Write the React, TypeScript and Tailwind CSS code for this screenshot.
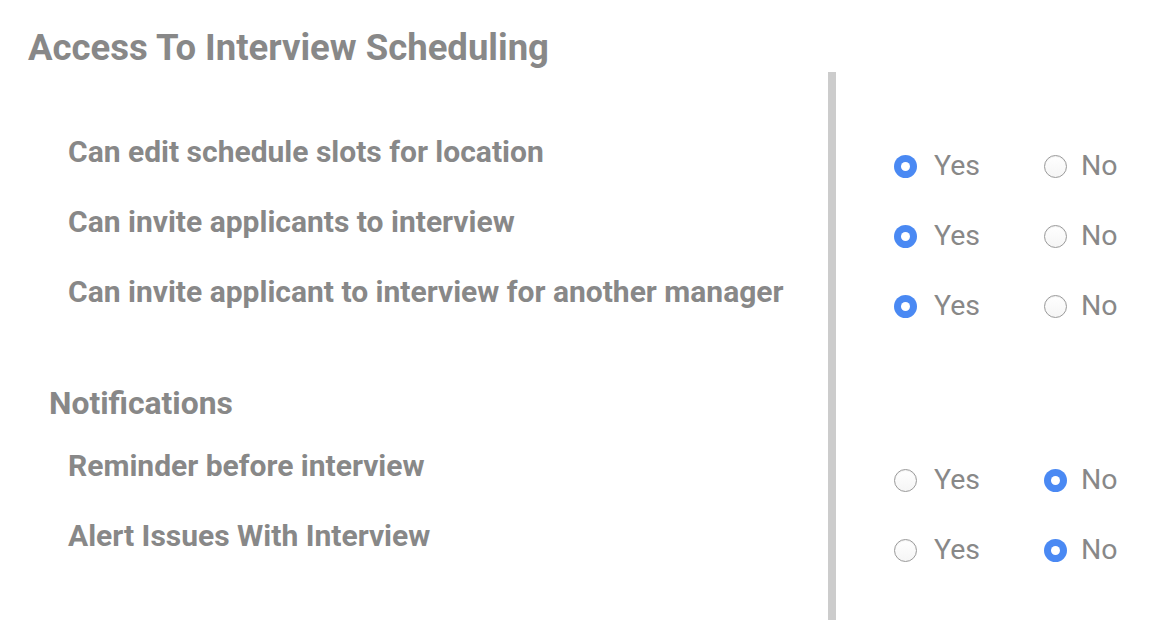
const access = [
  { label: "Can edit schedule slots for location", value: true },
  { label: "Can invite applicants to interview", value: true },
  { label: "Can invite applicant to interview for another manager", value: true },
];

const notifications = [
  { label: "Reminder before interview", value: false },
  { label: "Alert Issues With Interview", value: false },
];

function Radio({ checked }: { checked: boolean }) {
  return checked ? (
    <span className="flex h-[23px] w-[23px] shrink-0 items-center justify-center rounded-full bg-[#4a89f3]">
      <span className="block h-[9px] w-[9px] rounded-full bg-white" />
    </span>
  ) : (
    <span className="block h-[23px] w-[23px] shrink-0 rounded-full border border-[#9a9a9a] bg-gradient-to-b from-white to-[#f5f5f5] shadow-[inset_0_1px_1px_rgba(0,0,0,0.06)]" />
  );
}

function Choice({ value }: { value: boolean }) {
  return (
    <div className="flex h-[70px] items-center pl-[58px]">
      <div className="flex w-[150px] items-center gap-[17px]">
        <Radio checked={value} />
        <span>Yes</span>
      </div>
      <div className="flex items-center gap-[14px]">
        <Radio checked={!value} />
        <span>No</span>
      </div>
    </div>
  );
}

export default function App() {
  return (
    <div className="h-[620px] overflow-hidden bg-white font-['Roboto',sans-serif] text-[#888888]">
      <h1 className="pl-[28px] pt-[27px] text-[36.5px] font-bold leading-[42px]">
        Access To Interview Scheduling
      </h1>

      <div className="mt-[3px] flex h-[548px]">
        <div className="w-[828px] pt-[45px] text-[30px] font-bold">
          {access.map((row) => (
            <div key={row.label} className="flex h-[70px] items-center pl-[68px] leading-[36px]">
              {row.label}
            </div>
          ))}
          <h2 className="mb-[8px] mt-[56px] pl-[49px] text-[31.8px] leading-[40px]">Notifications</h2>
          {notifications.map((row) => (
            <div key={row.label} className="flex h-[70px] items-center pl-[68px] leading-[36px]">
              {row.label}
            </div>
          ))}
        </div>

        <div className="flex-1 border-l-[8px] border-[#cccccc] pt-[59px] text-[28.5px]">
          {access.map((row) => (
            <Choice key={row.label} value={row.value} />
          ))}
          <div className="h-[104px]" />
          {notifications.map((row) => (
            <Choice key={row.label} value={row.value} />
          ))}
        </div>
      </div>
    </div>
  );
}
